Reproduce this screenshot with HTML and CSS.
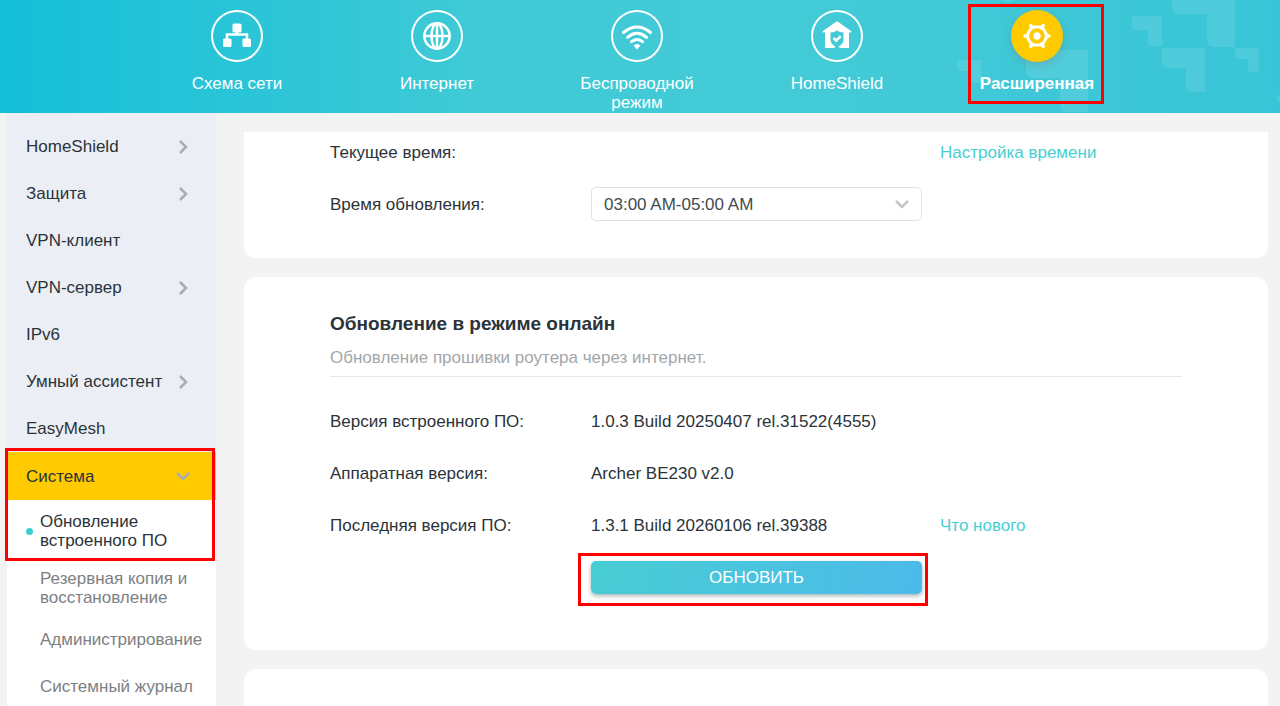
FILE: index.html
```html
<!DOCTYPE html>
<html lang="ru">
<head>
<meta charset="utf-8">
<meta name="viewport" content="width=device-width, initial-scale=1">
<title>Обновление встроенного ПО</title>
<link rel="stylesheet" href="styles.css">
</head>
<body>
<header class="header">
  <svg class="pattern" viewBox="940 0 340 113" aria-hidden="true">
    <path d="M1132 16h30v30h-10a4 4 0 0 1-4-4V30h-12a4 4 0 0 1-4-4z"/>
    <path d="M1172 0h63v47h-22a6 6 0 0 1-6-6V14h-29a6 6 0 0 1-6-6z"/>
    <path d="M1162 48h43v44h-13a6 6 0 0 1-6-6V68h-18a6 6 0 0 1-6-6z"/>
    <path d="M1235 48h21a3 3 0 0 1 3 3v21h-8a3 3 0 0 1-3-3V59h-10a3 3 0 0 1-3-3z"/>
    <path d="M957 60h24v23h-7a3 3 0 0 1-3-3V71h-11a3 3 0 0 1-3-3z"/>
    <path d="M1026 50h62v62h-22a6 6 0 0 1-6-6V78h-28a6 6 0 0 1-6-6z"/>
    <path d="M1001 0h13v2h-11zM1280 95v8l-3-3v-3z"/>
  </svg>
  <nav class="nav">
    <a class="nav-item" href="#map">
      <span class="nav-icon"><svg viewBox="0 0 52 52"><g class="fill"><rect x="21.500" y="13.500" width="9" height="9" rx="1.500"/><rect x="12" y="28.500" width="8.500" height="8.500" rx="1.500"/><rect x="31.500" y="28.500" width="8.500" height="8.500" rx="1.500"/></g><path class="line heavy" d="M26 22v3M16 29v-4.500h20V29"/></svg></span>
      <span>Схема сети</span>
    </a>
    <a class="nav-item" href="#internet">
      <span class="nav-icon"><svg viewBox="0 0 52 52"><g class="line heavy"><circle cx="26" cy="26" r="12.700"/><ellipse cx="26" cy="26" rx="5.500" ry="12.700"/><path d="M26 13v26M13 26h26"/></g></svg></span>
      <span>Интернет</span>
    </a>
    <a class="nav-item" href="#wireless">
      <span class="nav-icon"><svg viewBox="0 0 52 52"><path class="line thick" d="M12.500 22.500q13.500-11 27 0M16.500 27.300q9.500-8 19 0M20.500 31.700q5.500-4.500 11 0"/><path class="fill" d="M22.500 35.500q3.500-3 7 0L26 39.500z"/></svg></span>
      <span>Беспроводной режим</span>
    </a>
    <a class="nav-item" href="#homeshield">
      <span class="nav-icon"><svg viewBox="0 0 52 52"><path class="fill" fill-rule="evenodd" d="M26 11.500q1 0 2 1l12 8.500q1 1.500-1 1.500h-1V38H29l-1.500-1.500q5-2.500 5-7V22.500q-4 0-6.500-2-2.500 2-6.500 2v7q0 4.500 5 7L23 38h-9V22.500h-1q-2 0-1-1.500l12-8.500q1-1 2-1z"/><path class="line heavy" d="M22.500 28l2.700 2.700 4.500-4.500"/></svg></span>
      <span>HomeShield</span>
    </a>
    <a class="nav-item active" href="#advanced" aria-current="page">
      <span class="nav-icon"><svg viewBox="0 0 52 52"><path class="fill" fill-rule="evenodd" d="M19.800 15.500h12.400L38 26l-5.800 10.500H19.800L14 26zM26 18.200a7.800 7.800 0 1 0 0 15.600 7.800 7.800 0 1 0 0-15.600z"/><g class="fill"><circle cx="26" cy="26" r="3.700"/><circle cx="14" cy="26" r="1.700"/><circle cx="38" cy="26" r="1.700"/><circle cx="19.800" cy="15.500" r="1.700"/><circle cx="32.200" cy="15.500" r="1.700"/><circle cx="19.800" cy="36.500" r="1.700"/><circle cx="32.200" cy="36.500" r="1.700"/></g></svg></span>
      <span>Расширенная</span>
    </a>
  </nav>
</header>

<div class="layout">
  <aside class="sidebar">
    <a class="side-item" href="#hs">HomeShield<svg class="chev" viewBox="0 0 14 14"><path d="M4 1l6 6-6 6"/></svg></a>
    <a class="side-item" href="#security">Защита<svg class="chev" viewBox="0 0 14 14"><path d="M4 1l6 6-6 6"/></svg></a>
    <a class="side-item" href="#vpn-client">VPN-клиент</a>
    <a class="side-item" href="#vpn-server">VPN-сервер<svg class="chev" viewBox="0 0 14 14"><path d="M4 1l6 6-6 6"/></svg></a>
    <a class="side-item" href="#ipv6">IPv6</a>
    <a class="side-item" href="#assistant">Умный ассистент<svg class="chev" viewBox="0 0 14 14"><path d="M4 1l6 6-6 6"/></svg></a>
    <a class="side-item" href="#easymesh">EasyMesh</a>
    <div class="marked">
      <a class="side-item open" href="#system">Система<svg class="chev" viewBox="0 0 14 14"><path d="M1 4l6 6 6-6"/></svg></a>
      <a class="sub-item current" href="#firmware">Обновление встроенного ПО</a>
    </div>
    <div class="sub-list">
      <a class="sub-item" href="#backup">Резервная копия и восстановление</a>
      <a class="sub-item" href="#admin">Администрирование</a>
      <a class="sub-item" href="#log">Системный журнал</a>
    </div>
  </aside>

  <main class="content">
    <section class="card card-top">
      <div class="row">
        <span>Текущее время:</span>
        <span></span>
        <a class="link" href="#time">Настройка времени</a>
      </div>
      <div class="row">
        <label for="update-time">Время обновления:</label>
        <div class="select">
          <select id="update-time"><option>03:00 AM-05:00 AM</option></select>
          <svg class="chev" viewBox="0 0 14 14" aria-hidden="true"><path d="M1 4l6 6 6-6"/></svg>
        </div>
      </div>
    </section>

    <section class="card card-online">
      <h2 class="title">Обновление в режиме онлайн</h2>
      <p class="hint">Обновление прошивки роутера через интернет.</p>
      <div class="row"><span>Версия встроенного ПО:</span><span>1.0.3 Build 20250407 rel.31522(4555)</span></div>
      <div class="row"><span>Аппаратная версия:</span><span>Archer BE230 v2.0</span></div>
      <div class="row"><span>Последняя версия ПО:</span><span>1.3.1 Build 20260106 rel.39388</span><a class="link" href="#news">Что нового</a></div>
      <div class="row"><div class="action"><button class="button" type="button">ОБНОВИТЬ</button></div></div>
    </section>

    <section class="card card-next"></section>
  </main>
</div>
</body>
</html>
```
FILE: styles.css
```css
*,
*::before,
*::after {
  box-sizing: border-box;
}

body {
  margin: 0;
  height: 100vh;
  display: flex;
  flex-direction: column;
  overflow: hidden;
  background: #f3f3f3;
  color: #2b3338;
  font-family: "Liberation Sans", Arial, sans-serif;
  font-size: 17px;
  line-height: 19px;
}

a {
  color: inherit;
  text-decoration: none;
}

/* Header */

.header {
  position: relative;
  flex: none;
  min-height: 113px;
  background: linear-gradient(90deg, #14bfd9 0%, #40cad6 38%, #43cad7 65%, #38c5d7 100%);
  color: #fff;
}

.pattern {
  position: absolute;
  top: 0;
  right: 0;
  width: 340px;
  height: 113px;
  fill: rgba(255, 255, 255, 0.1);
}

.nav {
  display: flex;
  justify-content: center;
  padding: 10px 6px 0 0;
}

.nav-item {
  position: relative;
  width: 200px;
  padding: 0 40px;
  display: flex;
  flex-direction: column;
  align-items: center;
  gap: 12px;
  text-align: center;
}

.nav-icon {
  width: 52px;
  height: 52px;
  border-radius: 50%;
  box-shadow: inset 0 0 0 2px #fff;
}

.nav-icon svg {
  display: block;
}

.fill {
  fill: #fff;
}

.line {
  fill: none;
  stroke: #fff;
  stroke-width: 2;
}

.heavy {
  stroke-width: 2.5;
}

.thick {
  stroke-width: 3;
  stroke-linecap: round;
}

.active {
  font-weight: bold;
}

.active .nav-icon {
  background: #ffca00;
  box-shadow: 0 3px 8px rgba(120, 130, 130, 0.4);
}

/* Red highlight frames */

.active::after,
.marked::after,
.action::after {
  content: "";
  position: absolute;
  border: 3px solid #f00;
  pointer-events: none;
}

.active::after {
  inset: -6px 33px auto 31px;
  height: 100px;
}

.marked::after {
  inset: -4px 1px 0 -2px;
}

.action::after {
  inset: -8px -6px -12px -13px;
}

/* Layout */

.layout {
  flex: 1;
  min-height: 0;
  display: flex;
  padding: 0 12px 0 7px;
  gap: 28px;
}

.sidebar {
  flex: none;
  width: 209px;
  padding-top: 10px;
  background: #ebeff5;
}

.side-item {
  display: flex;
  align-items: center;
  justify-content: space-between;
  height: 47px;
  padding: 0 26px 0 19px;
}

.chev {
  width: 14px;
  height: 14px;
  fill: none;
  stroke: #a9adb1;
  stroke-width: 2.5;
}

.open {
  height: 48px;
  background: #ffca00;
}

.marked {
  position: relative;
  background: #fff;
}

.sub-list {
  background: #fff;
}

.sub-item {
  display: flex;
  align-items: center;
  min-height: 47px;
  padding: 8px 13px 9px 33px;
  color: #7d8182;
}

.current {
  position: relative;
  padding-top: 12px;
  padding-bottom: 11px;
  color: #2b3338;
}

.current::before {
  content: "";
  position: absolute;
  left: 19px;
  width: 7px;
  height: 7px;
  border-radius: 50%;
  background: #3fcfd3;
}

.content {
  flex: 1;
  min-width: 0;
  display: flex;
  flex-direction: column;
  gap: 19px;
  padding-top: 19px;
}

.card {
  flex: none;
  padding: 0 86px;
  background: #fff;
  border-radius: 12px;
  display: flex;
  flex-direction: column;
  gap: 18px;
}

.card-top {
  padding-top: 3px;
  padding-bottom: 37px;
  border-radius: 0 0 12px 12px;
}

.card-online {
  padding-top: 37px;
  padding-bottom: 56px;
}

.card-next {
  flex: 1;
  border-radius: 12px 12px 0 0;
}

.title {
  margin: 0;
  font-size: 19px;
  line-height: 20px;
}

.hint {
  margin: -4px 0 9px;
  padding-bottom: 9px;
  border-bottom: 1px solid #e6e8ea;
  color: #a3a7aa;
}

.row {
  display: grid;
  grid-template-columns: 261px 349px 1fr;
  align-items: center;
  min-height: 34px;
}

.link {
  color: #48ced2;
}

.select {
  position: relative;
  width: 331px;
}

.select select {
  display: block;
  width: 100%;
  height: 34px;
  padding: 0 12px;
  appearance: none;
  border: 1px solid #dfe2e5;
  border-radius: 5px;
  background: #fff;
  color: #414b50;
  font: inherit;
}

.select .chev {
  position: absolute;
  top: 10px;
  right: 13px;
  stroke: #c4c7c9;
  pointer-events: none;
}

.action {
  position: relative;
  grid-column: 2;
  width: 331px;
}

.button {
  display: block;
  width: 100%;
  height: 33px;
  border: 0;
  border-radius: 5px;
  background: linear-gradient(100deg, #48cdd3, #4cbaea);
  box-shadow: 0 2px 4px rgba(60, 90, 100, 0.45);
  color: #fff;
  font: inherit;
}
```
